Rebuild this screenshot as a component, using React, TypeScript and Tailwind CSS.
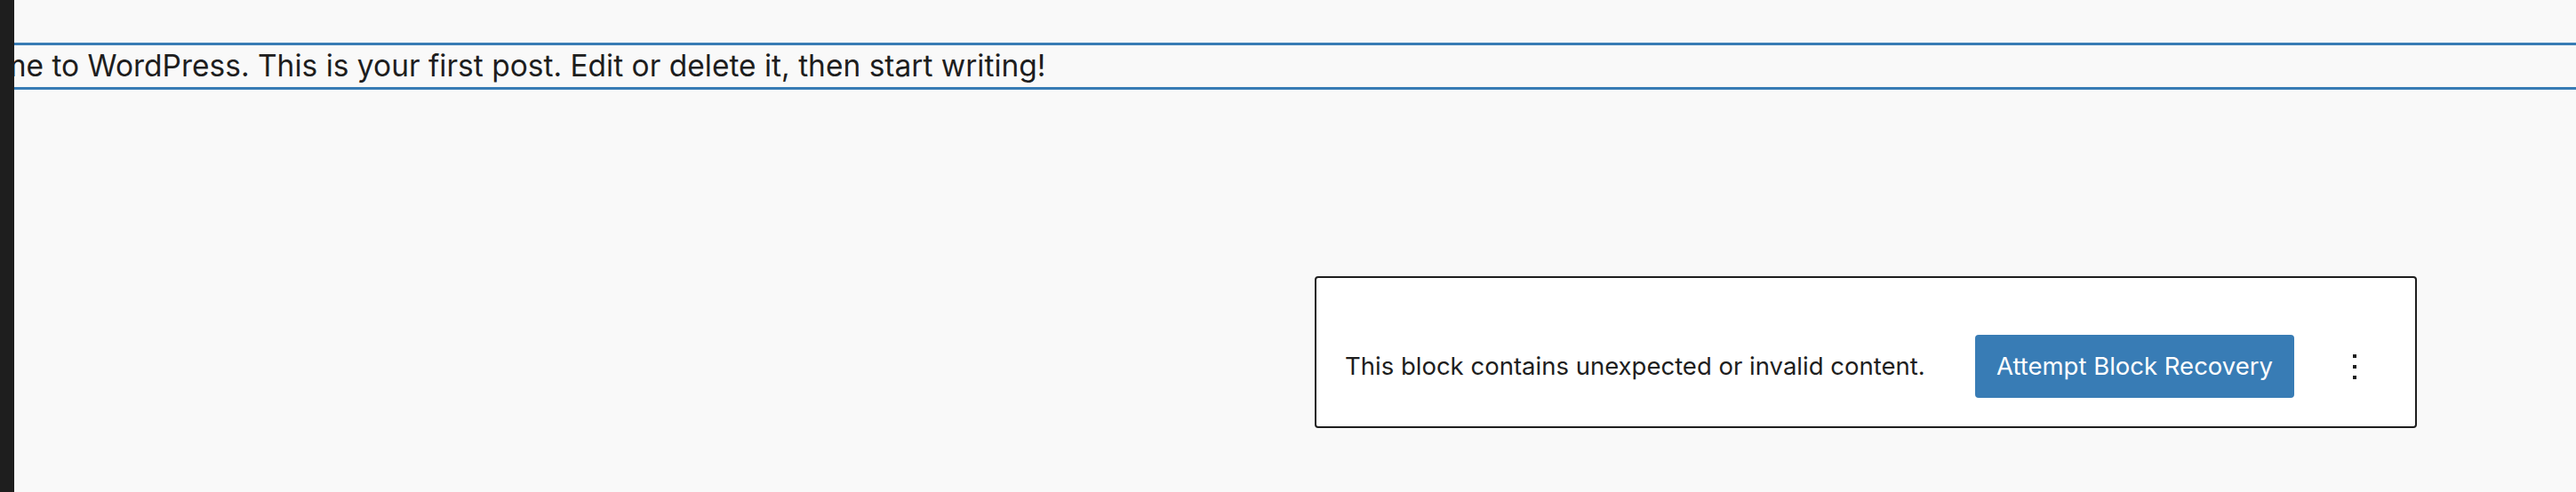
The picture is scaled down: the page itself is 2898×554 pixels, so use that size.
import React from "react";

const MoreVertical: React.FC = () => (
  <svg width="48" height="48" viewBox="0 0 24 24" fill="#1e1e1e" aria-hidden="true">
    <path d="M13 19h-2v-2h2v2zm0-6h-2v-2h2v2zm0-6h-2V5h2v2z" />
  </svg>
);

const App: React.FC = () => {
  return (
    <div className="flex h-[554px] w-[2898px] overflow-hidden bg-[#f9f9f9] font-['Inter','Noto_Sans',sans-serif] text-[#1e1e1e]">
      {/* admin sidebar edge */}
      <div className="w-4 shrink-0 bg-[#1e1e1e]" />

      <main className="flex min-w-0 flex-1 flex-col overflow-hidden">
        {/* selected paragraph */}
        <div className="mt-12 flex h-[53px] items-center overflow-hidden border-y-[3px] border-[#387cb5]">
          <p className="-ml-[114px] whitespace-nowrap text-[33.5px] leading-none">
            Welcome to WordPress. This is your first post. Edit or delete it, then start writing!
          </p>
        </div>

        {/* invalid block warning */}
        <div className="ml-[1463px] mt-[210px] flex w-[1240px] items-center rounded-[4px] border-2 border-[#1e1e1e] bg-white pb-8 pl-8 pr-[44px] pt-16">
          <p className="flex-1 text-[27.5px] leading-none">
            This block contains unexpected or invalid content.
          </p>
          <button className="h-[71px] rounded-[4px] bg-[#387cb5] px-6 text-[27.5px] text-white">
            Attempt Block Recovery
          </button>
          <button className="ml-[44px] flex h-12 w-12 items-center justify-center" aria-label="More options">
            <MoreVertical />
          </button>
        </div>
      </main>
    </div>
  );
};

export default App;
